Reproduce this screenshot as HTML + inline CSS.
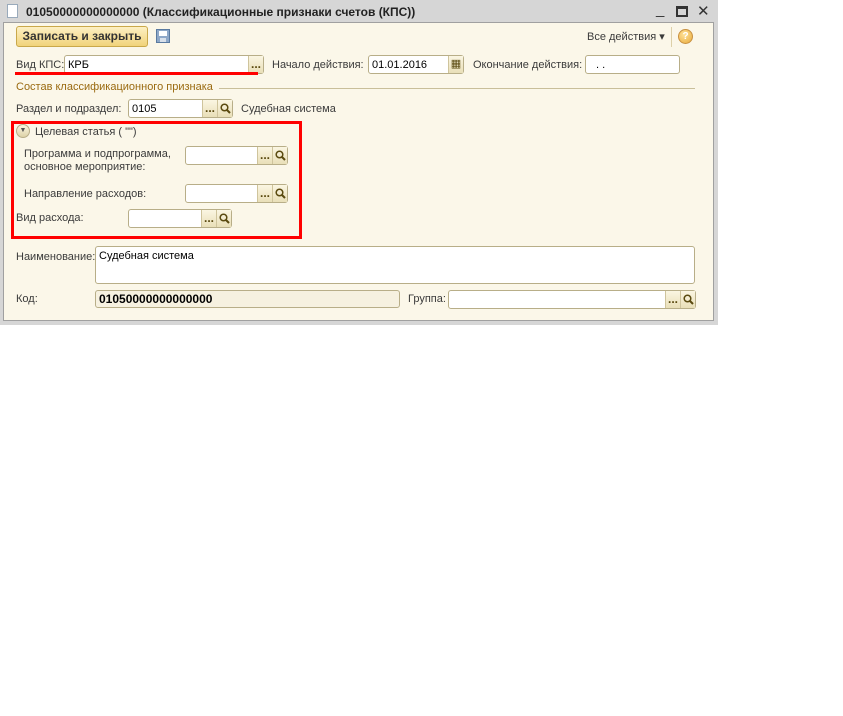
<!DOCTYPE html>
<html><head><meta charset="utf-8"><style>
*{margin:0;padding:0;box-sizing:border-box}
body{width:843px;height:716px;background:#fff;font-family:"Liberation Sans","DejaVu Sans",sans-serif;font-size:11px;color:#3b3b3b;position:relative;overflow:hidden}
.a{position:absolute;white-space:nowrap}
.win{position:absolute;left:0;top:0;width:718px;height:325px;background:#d6d6d6}
.body{position:absolute;left:3px;top:22px;width:711px;height:299px;background:#fbf7e9;border:1px solid #a0a0a0}
.inp{position:absolute;background:#fff;border:1px solid #b8ae88;border-radius:3px;height:19px}
.btn{position:absolute;top:0;bottom:0;width:15px;background:linear-gradient(#fbf6e2,#e9dfb8);border-left:1px solid #cfc49c;font-size:12px;font-weight:bold;color:#5a4a10;text-align:center;line-height:17px}
.btn svg{position:absolute;left:2px;top:3px}
.t{position:absolute;left:3px;top:3px;color:#000}
</style></head><body>
<div class="win">
<div class="a" style="left:7px;top:4px;width:11px;height:14px;background:#fff;border:1px solid #9ab"></div>
<div class="a" style="left:26px;top:5px;font-weight:bold;font-size:12px;color:#222">01050000000000000 (Классификационные признаки счетов (КПС))</div>
<div class="a" style="left:656px;top:1px;font-size:15px;color:#333">_</div>
<div class="a" style="left:676px;top:6px;width:12px;height:11px;border:2px solid #333;border-top-width:3px"></div>
<div class="a" style="left:697px;top:2px;font-size:15px;font-weight:bold;color:#333">✕</div>
<div class="body"></div>
</div>
<div class="a" style="left:16px;top:26px;width:132px;height:21px;border:1px solid #c9a84a;border-radius:3px;background:linear-gradient(#fdf0c4,#f1d37a);font-weight:bold;font-size:12px;color:#333;text-align:center;line-height:19px">Записать и закрыть</div>
<div class="a" style="left:156px;top:29px;width:14px;height:14px;background:#8ea8c8;border:1px solid #5a7aa0"><div style="position:absolute;left:2px;top:1px;width:8px;height:5px;background:#fff"></div><div style="position:absolute;left:3px;top:8px;width:6px;height:4px;background:#d8e0ea"></div></div>
<div class="a" style="left:587px;top:30px">Все действия ▾</div>
<div class="a" style="left:671px;top:27px;width:1px;height:20px;background:#ddd0a8"></div>
<div class="a" style="left:678px;top:29px;width:15px;height:15px;border-radius:50%;background:radial-gradient(circle at 40% 35%,#ffe39a,#e8a93a);border:1px solid #c89040;font-size:10px;font-weight:bold;color:#fff;text-align:center;line-height:13px">?</div>

<div class="a" style="left:16px;top:59px">Вид КПС:</div>
<div class="inp" style="left:64px;top:55px;width:200px"><span class="t">КРБ</span><div class="btn" style="right:0">...</div></div>
<div class="a" style="left:15px;top:72px;width:243px;height:3px;background:#f00"></div>
<div class="a" style="left:272px;top:59px">Начало действия:</div>
<div class="inp" style="left:368px;top:55px;width:96px"><span class="t">01.01.2016</span><div class="btn" style="right:0;font-weight:normal;font-size:11px">▦</div></div>
<div class="a" style="left:473px;top:59px">Окончание действия:</div>
<div class="inp" style="left:585px;top:55px;width:95px"><span class="t" style="left:10px">. .</span></div>

<div class="a" style="left:16px;top:81px;color:#9a6a10">Состав классификационного признака</div>
<div class="a" style="left:219px;top:88px;width:476px;height:1px;background:#c9bf9a"></div>

<div class="a" style="left:16px;top:103px">Раздел и подраздел:</div>
<div class="inp" style="left:128px;top:99px;width:105px"><span class="t">0105</span><div class="btn" style="right:15px">...</div><div class="btn" style="right:0"><svg width="11" height="11"><circle cx="4.5" cy="4.5" r="3.3" fill="none" stroke="#5a4a10" stroke-width="1.5"/><path d="M7 7L10 10" stroke="#5a4a10" stroke-width="2"/></svg></div></div>
<div class="a" style="left:241px;top:103px">Судебная система</div>

<div class="a" style="left:11px;top:121px;width:291px;height:118px;border:3px solid #f00"></div>
<div class="a" style="left:16px;top:124px;width:14px;height:14px;border-radius:50%;background:linear-gradient(#fbf6e2,#ddd2a8);border:1px solid #b8ae88;font-size:7px;text-align:center;line-height:12px;color:#555">▼</div>
<div class="a" style="left:35px;top:126px">Целевая статья ( "")</div>
<div class="a" style="left:24px;top:148px;line-height:13px">Программа и подпрограмма,<br>основное мероприятие:</div>
<div class="inp" style="left:185px;top:146px;width:103px"><div class="btn" style="right:15px">...</div><div class="btn" style="right:0"><svg width="11" height="11"><circle cx="4.5" cy="4.5" r="3.3" fill="none" stroke="#5a4a10" stroke-width="1.5"/><path d="M7 7L10 10" stroke="#5a4a10" stroke-width="2"/></svg></div></div>
<div class="a" style="left:24px;top:188px">Направление расходов:</div>
<div class="inp" style="left:185px;top:184px;width:103px"><div class="btn" style="right:15px">...</div><div class="btn" style="right:0"><svg width="11" height="11"><circle cx="4.5" cy="4.5" r="3.3" fill="none" stroke="#5a4a10" stroke-width="1.5"/><path d="M7 7L10 10" stroke="#5a4a10" stroke-width="2"/></svg></div></div>
<div class="a" style="left:16px;top:212px">Вид расхода:</div>
<div class="inp" style="left:128px;top:209px;width:104px"><div class="btn" style="right:15px">...</div><div class="btn" style="right:0"><svg width="11" height="11"><circle cx="4.5" cy="4.5" r="3.3" fill="none" stroke="#5a4a10" stroke-width="1.5"/><path d="M7 7L10 10" stroke="#5a4a10" stroke-width="2"/></svg></div></div>

<div class="a" style="left:16px;top:251px">Наименование:</div>
<div class="inp" style="left:95px;top:246px;width:600px;height:38px"><span class="t">Судебная система</span></div>
<div class="a" style="left:16px;top:293px">Код:</div>
<div class="inp" style="left:95px;top:290px;width:305px;height:18px;background:#f6f1e0"><span class="t" style="font-weight:bold;font-size:12px;top:1px">01050000000000000</span></div>
<div class="a" style="left:408px;top:293px">Группа:</div>
<div class="inp" style="left:448px;top:290px;width:248px"><div class="btn" style="right:15px">...</div><div class="btn" style="right:0"><svg width="11" height="11"><circle cx="4.5" cy="4.5" r="3.3" fill="none" stroke="#5a4a10" stroke-width="1.5"/><path d="M7 7L10 10" stroke="#5a4a10" stroke-width="2"/></svg></div></div>
</body></html>
